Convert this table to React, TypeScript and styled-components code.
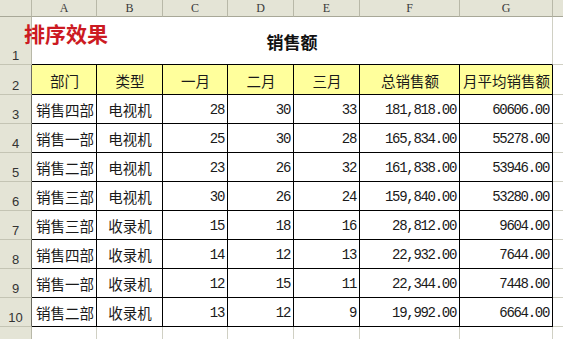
import React from "react";
import styled, { createGlobalStyle } from "styled-components";

const GlobalStyle = createGlobalStyle`
	html, body {
		margin: 0;
		padding: 0;
		background: #ffffff;
		overflow: hidden;
	}
`;

const Sheet = styled.div`
	position: relative;
	width: 563px;
	height: 339px;
	overflow: hidden;
	display: grid;
	grid-template-columns: 32px 65px 66px 65px 66px 66px 100px 93px 40px;
	grid-template-rows: 17px 48px 30px repeat(8, 29px) 29px;
	font-family: "Noto Sans CJK SC", "Liberation Sans", sans-serif;
	color: #111;
	box-sizing: border-box;
`;

const ColHead = styled.div`
	box-sizing: border-box;
	background: #e4e4d6;
	border-right: 1px solid #b8b8a8;
	border-bottom: 1px solid #a8a898;
	display: flex;
	align-items: center;
	justify-content: center;
	font-family: "Liberation Serif", serif;
	font-size: 12px;
	color: #3a3a3a;
	padding-top: 1px;
`;

const RowHead = styled.div<{ $dark?: boolean }>`
	box-sizing: border-box;
	background: #e4e4d6;
	border-right: 1px solid ${(p) => (p.$dark ? "#6a6a60" : "#b8b8a8")};
	border-bottom: 1px solid #c4c4b4;
	display: flex;
	align-items: flex-end;
	justify-content: center;
	font-family: "Liberation Sans", sans-serif;
	font-size: 13px;
	color: #333;
	padding-bottom: 1px;
`;

const Title = styled.div`
	box-sizing: border-box;
	grid-column: span 7;
	border-bottom: 1px solid #000;
	border-right: 1px solid #d0d0c4;
	display: flex;
	align-items: center;
	justify-content: center;
	font-size: 17px;
	font-weight: 700;
	color: #111;
	padding-top: 2px;
`;

const Stamp = styled.div`
	position: absolute;
	left: 24px;
	top: 21px;
	font-family: "Noto Sans CJK SC", sans-serif;
	font-size: 21px;
	font-weight: 700;
	color: #cc1a22;
	letter-spacing: 0;
	line-height: 1.2;
`;

const Blank = styled.div`
	box-sizing: border-box;
	border-right: 1px solid #d0d0c4;
	border-bottom: 1px solid #d0d0c4;
`;

const Cell = styled.div<{ $align: "left" | "center" | "right"; $head?: boolean; $num?: boolean }>`
	box-sizing: border-box;
	border-right: 1px solid #000;
	border-bottom: 1px solid #000;
	background: ${(p) => (p.$head ? "#ffff9c" : "#ffffff")};
	display: flex;
	align-items: center;
	justify-content: ${(p) =>
		p.$align === "left" ? "flex-start" : p.$align === "right" ? "flex-end" : "center"};
	padding: 1px 3px 0 4px;
	white-space: nowrap;
	font-family: ${(p) =>
		p.$num ? '"Liberation Mono", monospace' : '"Noto Sans CJK SC", sans-serif'};
	font-size: ${(p) => (p.$num ? "14px" : "14.5px")};
	letter-spacing: ${(p) => (p.$num ? "-1.3px" : "0")};
	color: #1a1a1a;
`;

const headers = ["部门", "类型", "一月", "二月", "三月", "总销售额", "月平均销售额"];

const rows: (string | number)[][] = [
	["销售四部", "电视机", 28, 30, 33, "181,818.00", "60606.00"],
	["销售一部", "电视机", 25, 30, 28, "165,834.00", "55278.00"],
	["销售二部", "电视机", 23, 26, 32, "161,838.00", "53946.00"],
	["销售三部", "电视机", 30, 26, 24, "159,840.00", "53280.00"],
	["销售三部", "收录机", 15, 18, 16, "28,812.00", "9604.00"],
	["销售四部", "收录机", 14, 12, 13, "22,932.00", "7644.00"],
	["销售一部", "收录机", 12, 15, 11, "22,344.00", "7448.00"],
	["销售二部", "收录机", 13, 12, 9, "19,992.00", "6664.00"],
];

const letters = ["A", "B", "C", "D", "E", "F", "G", ""];

export default function App() {
	return (
		<>
			<GlobalStyle />
			<Sheet>
				<ColHead />
				{letters.map((l, i) => (
					<ColHead key={i}>{l}</ColHead>
				))}

				<RowHead>1</RowHead>
				<Title>销售额</Title>
				<Blank />

				<RowHead $dark>2</RowHead>
				{headers.map((h) => (
					<Cell key={h} $align="center" $head>
						{h}
					</Cell>
				))}
				<Blank />

				{rows.map((r, ri) => (
					<React.Fragment key={ri}>
						<RowHead $dark>{ri + 3}</RowHead>
						{r.map((v, ci) => (
							<Cell
								key={ci}
								$align={ci === 0 ? "left" : ci === 1 ? "center" : "right"}
								$num={ci > 1}
							>
								{v}
							</Cell>
						))}
						<Blank />
					</React.Fragment>
				))}

				<RowHead>11</RowHead>
				{letters.map((_, i) => (
					<Blank key={i} />
				))}
				<Stamp>排序效果</Stamp>
			</Sheet>
		</>
	);
}
